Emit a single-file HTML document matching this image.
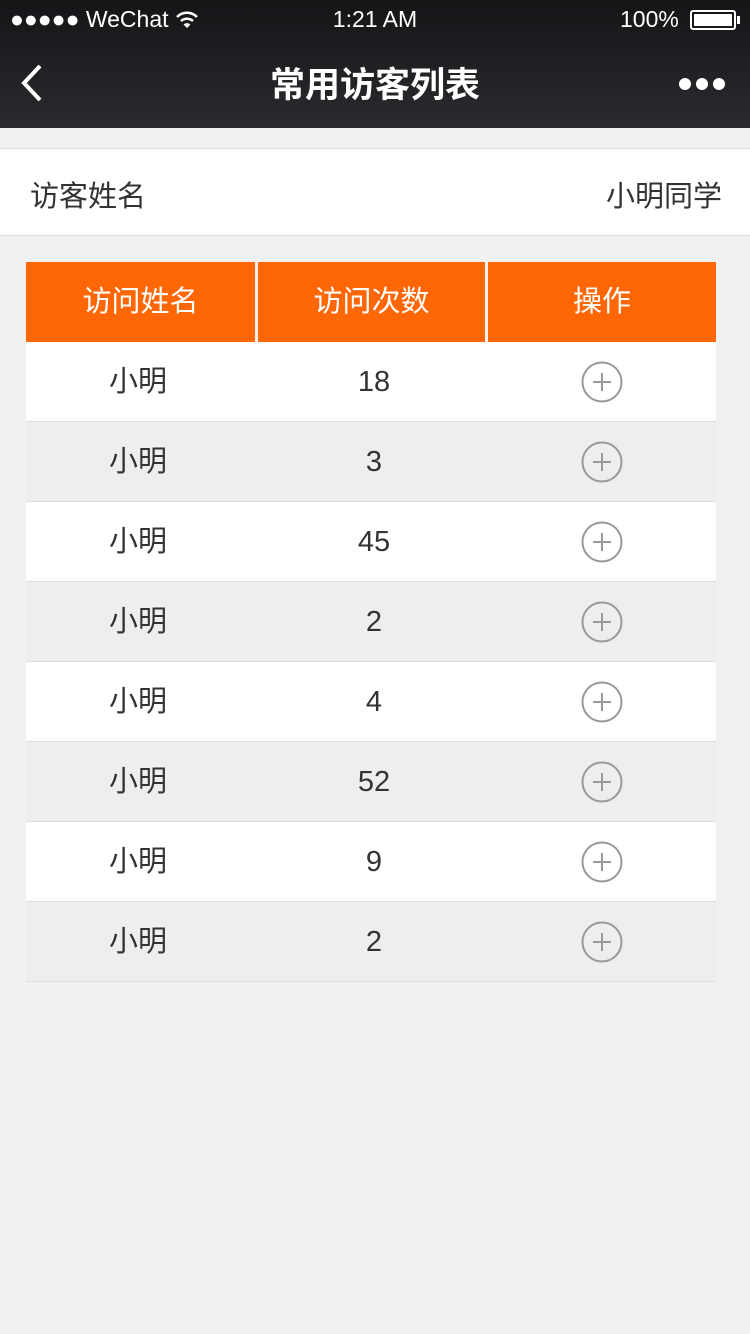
<!DOCTYPE html>
<html><head><meta charset="utf-8"><style>
*{margin:0;padding:0;box-sizing:border-box}
body{width:750px;height:1334px;background:#f1f1f1;font-family:"Liberation Sans","Noto Sans CJK SC",sans-serif;position:relative;overflow:hidden}
.nav{position:absolute;left:0;top:0;width:750px;height:128px;background:linear-gradient(#141517,#2a2b2e);color:#fff}
.sb{position:absolute;top:6px;font-size:23px}
.title{position:absolute;top:57px;width:750px;text-align:center;font-size:35px;font-weight:bold}
.info{position:absolute;top:148px;left:0;width:750px;height:88px;background:#fff;border-top:1px solid #ddd;border-bottom:1px solid #ddd;font-size:29px;color:#333}
.tbl{position:absolute;top:262px;left:26px;width:690px}
.hd{height:80px;position:relative}
.hc{position:absolute;top:0;height:80px;background:#ff6605;color:#fff;font-size:29px;line-height:80px;text-align:center}
.row{height:80px;position:relative;border-bottom:1px solid #ddd;font-size:29px;color:#333}
.row span{position:absolute;top:0;line-height:80px;text-align:center}
.row svg{position:absolute;left:555px;top:19px}
</style></head><body>
<div class="nav">
<div class="sb" style="left:10px">●●●●● WeChat
<svg width="24" height="18" viewBox="0 0 24 18" style="vertical-align:-2px"><path d="M2 6 A14 14 0 0 1 22 6" stroke="#fff" stroke-width="2.5" fill="none"/><path d="M6 10 A9 9 0 0 1 18 10" stroke="#fff" stroke-width="2.5" fill="none"/><path d="M12 17 L8.5 13.5 A5 5 0 0 1 15.5 13.5Z" fill="#fff"/></svg></div>
<div class="sb" style="left:0;width:750px;text-align:center">1:21 AM</div>
<div class="sb" style="left:620px">100%</div>
<div style="position:absolute;left:690px;top:10px;width:46px;height:20px;border:2px solid #fff;border-radius:3px;padding:2px"><div style="background:#fff;width:100%;height:100%"></div></div>
<div style="position:absolute;left:737px;top:16px;width:3px;height:8px;background:#fff"></div>
<svg style="position:absolute;left:18px;top:64px" width="26" height="38" viewBox="0 0 26 38"><path d="M22 2 L6 19 L22 36" stroke="#fff" stroke-width="4" fill="none"/></svg>
<div class="title">常用访客列表</div>
<div style="position:absolute;left:679px;top:78px">
<span style="position:absolute;left:0;width:12px;height:12px;border-radius:6px;background:#fff"></span>
<span style="position:absolute;left:17px;width:12px;height:12px;border-radius:6px;background:#fff"></span>
<span style="position:absolute;left:34px;width:12px;height:12px;border-radius:6px;background:#fff"></span></div>
</div>
<div class="info"><span style="position:absolute;left:30px;top:24px">访客姓名</span><span style="position:absolute;right:28px;top:24px">小明同学</span></div>
<div class="tbl">
<div class="hd"><div class="hc" style="left:0;width:229px">访问姓名</div><div class="hc" style="left:232px;width:227px">访问次数</div><div class="hc" style="left:462px;width:228px">操作</div></div>
<div id="rows"></div>
</div>
<script>
var n=["18","3","45","2","4","52","9","2"],h="";
n.forEach(function(v,i){h+='<div class="row" style="background:'+(i%2?'#eee':'#fff')+'"><span style="left:0;width:224px">小明</span><span style="left:232px;width:232px">'+v+'</span><svg width="42" height="42" viewBox="0 0 42 42"><circle cx="21" cy="21" r="19.5" stroke="#999" stroke-width="2" fill="none"/><path d="M12 21H30M21 12V30" stroke="#999" stroke-width="2"/></svg></div>'});
document.getElementById("rows").innerHTML=h;
</script>
</body></html>
